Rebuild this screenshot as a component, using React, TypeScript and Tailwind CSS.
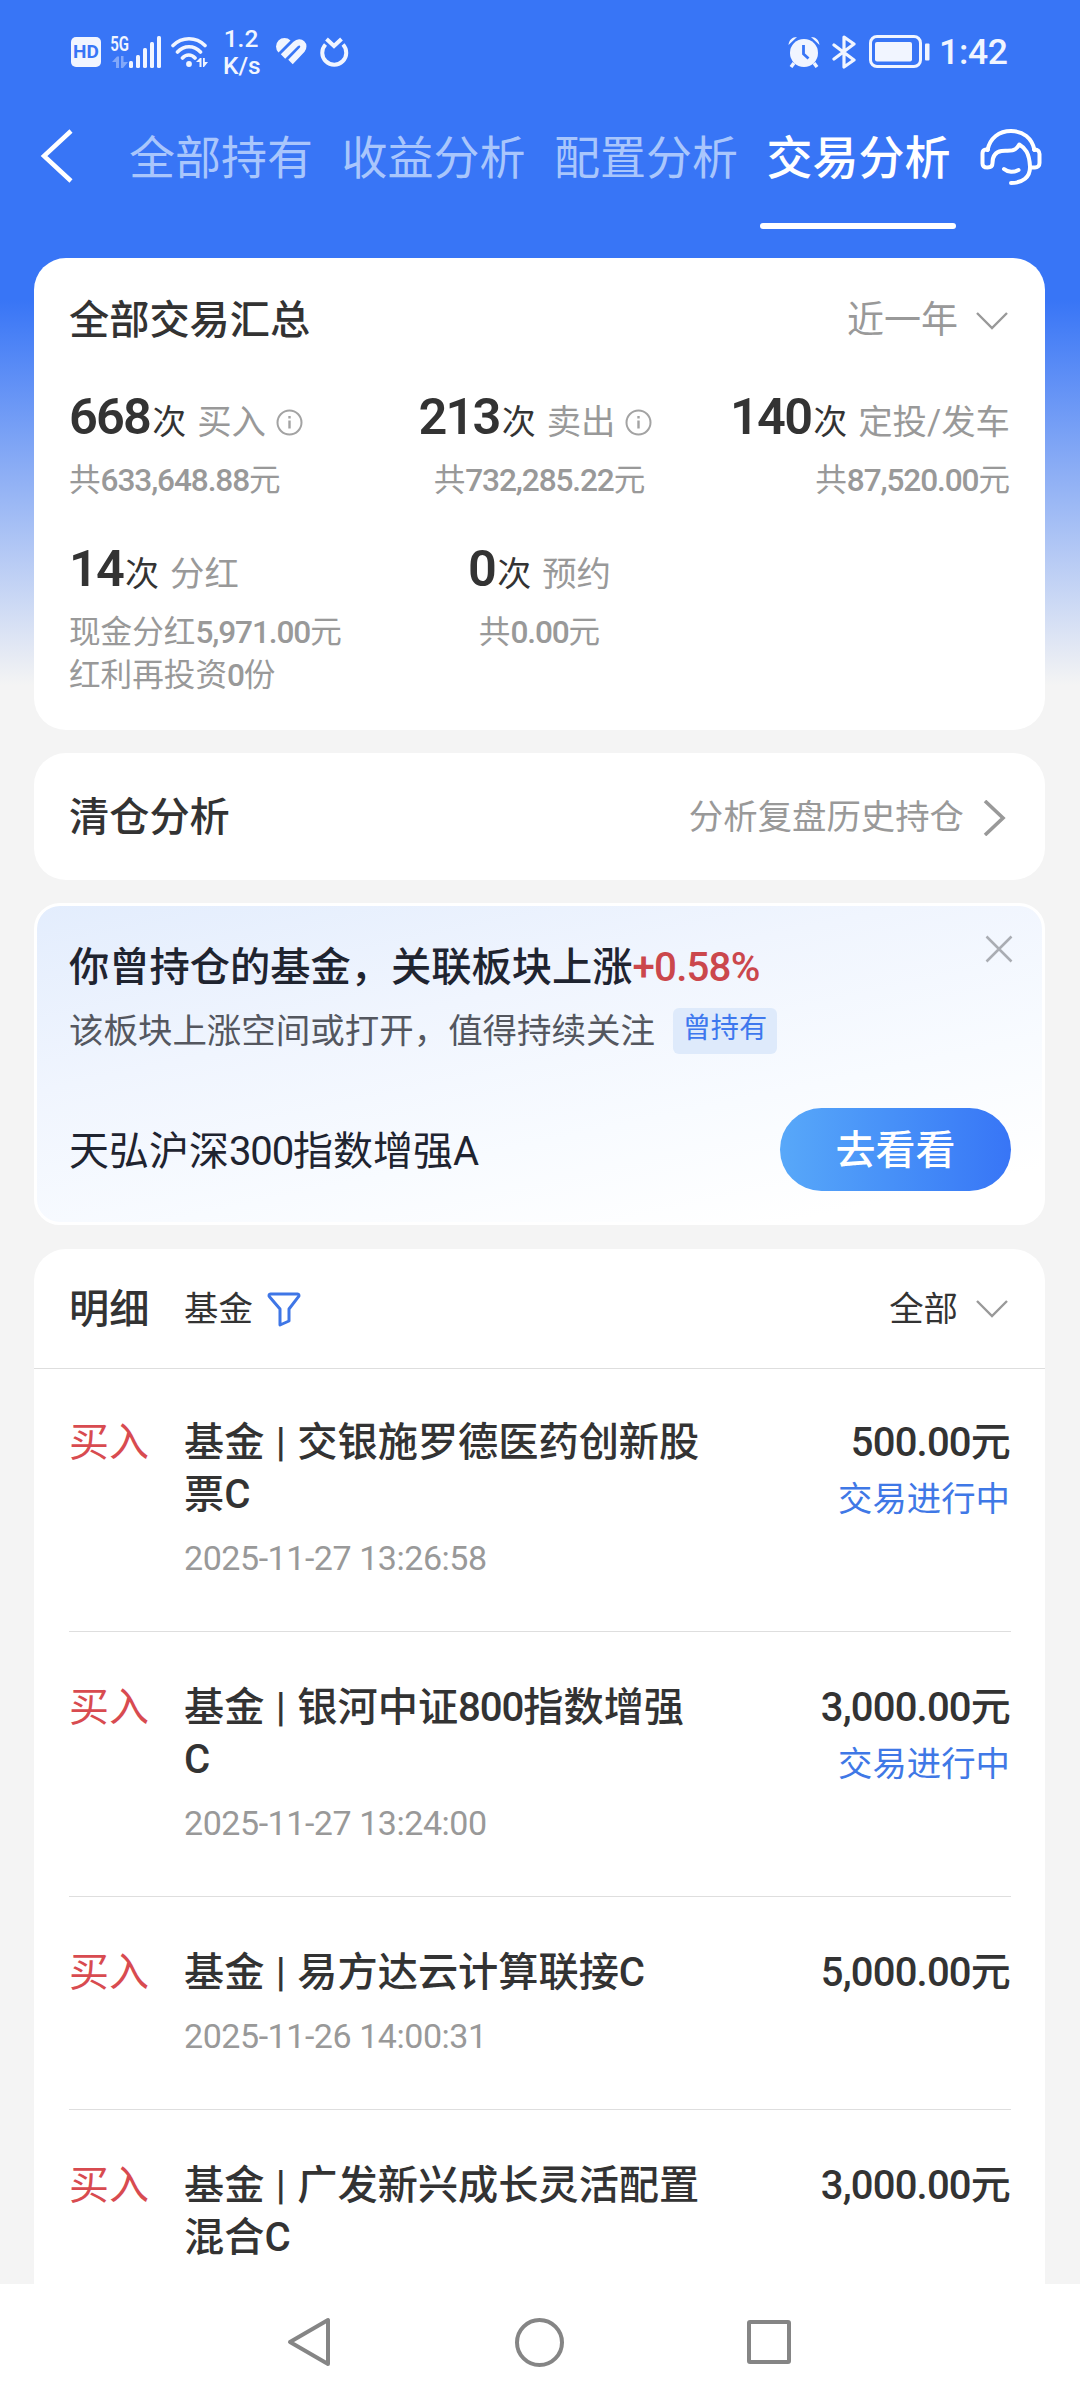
import type { ReactNode } from 'react';

const FONT = "font-[Roboto,'Noto_Sans_CJK_SC',sans-serif]";

type Trade = {
  id: number;
  type: string;
  name: string;
  time?: string;
  amount: string;
  status?: string;
};

const tabs = ['全部持有', '收益分析', '配置分析', '交易分析'];

const trades: Trade[] = [
  { id: 1, type: '买入', name: '基金 | 交银施罗德医药创新股票C', time: '2025-11-27 13:26:58', amount: '500.00', status: '交易进行中' },
  { id: 2, type: '买入', name: '基金 | 银河中证800指数增强C', time: '2025-11-27 13:24:00', amount: '3,000.00', status: '交易进行中' },
  { id: 3, type: '买入', name: '基金 | 易方达云计算联接C', time: '2025-11-26 14:00:31', amount: '5,000.00' },
  { id: 4, type: '买入', name: '基金 | 广发新兴成长灵活配置混合C', amount: '3,000.00' }
];

function StatusBar() {
  return (
    <div className="flex h-[104px] items-center text-[#f1f5ff]">
      <div className="ml-[71px] flex h-[30px] w-[30px] items-center justify-center rounded-[5px] bg-[#f1f5ff] text-[19px] leading-[30px] font-bold text-[#3875f6]">
        HD
      </div>
      <div className="ml-[10px] flex h-[32px] items-end">
        <div className="flex h-[32px] w-[18px] flex-col items-center justify-between">
          <span className="origin-center scale-x-75 text-[20px] leading-[17px] font-semibold">5G</span>
          <svg className="h-[12px] w-[16px]" viewBox="0 0 16 12" fill="currentColor" opacity=".4">
            <path d="M0 6l5-5.500h2V12H4V6zM9 0h2.500v6H16l-5 6H9z" />
          </svg>
        </div>
        <svg className="h-[32px] w-[34px]" viewBox="0 0 34 32" fill="currentColor">
          <rect x="0" y="25" width="4" height="7" rx="1.500" />
          <rect x="7" y="19" width="4" height="13" rx="1.500" />
          <rect x="14" y="12" width="4" height="20" rx="1.500" />
          <rect x="21" y="6" width="4" height="26" rx="1.500" />
          <rect x="28" y="0" width="4" height="32" rx="1.500" />
        </svg>
      </div>
      <svg className="ml-[8px] h-[32px] w-[38px]" viewBox="0 0 38 32" fill="none" stroke="currentColor" strokeWidth="3.600" strokeLinecap="round">
        <path d="M2 9.500c9-9 23-9 32 0M6.500 16c6.500-7 16.500-7 23 0M11.500 22c3.500-4 9-4 12.500 0" />
        <circle cx="18" cy="28" r="2.900" fill="currentColor" stroke="none" />
        <path d="M25 26l4-4h1.500v9h-2v-5zM32 22h1.800v4H37l-4 5h-1z" fill="currentColor" stroke="none" />
      </svg>
      <div className="ml-[14px] w-[36px] text-center text-[24.500px] leading-[27px] font-medium">
        <div>1.2</div>
        <div>K/s</div>
      </div>
      <svg className="ml-[17px] h-[28px] w-[32px]" viewBox="0 0 32 28" fill="none" stroke="currentColor" strokeWidth="6.200">
        <path d="M2.500 14.500A8 8 0 0 1 14.500 2.500z" fill="currentColor" stroke="none" />
        <path d="M7 18.500L19.500 6c5-4.500 10.500 1 6.500 6L14.500 24" />
      </svg>
      <svg className="ml-[12px] h-[30px] w-[29px]" viewBox="0 0 29 30" fill="none" stroke="currentColor" strokeWidth="4">
        <path d="M5.500 7.500a12 12 0 1 0 17.500 0" />
        <path d="M6.500 2l7.500 7L21.500 2" />
      </svg>
      <svg className="ml-auto h-[32px] w-[32px]" viewBox="0 0 32 32" fill="currentColor">
        <circle cx="16" cy="17" r="14" />
        <path d="M.500 9C1 4 4 1 9 1M31.500 9C31 4 28 1 23 1" />
        <path d="M6 27l-3 4M26 27l3 4" stroke="currentColor" strokeWidth="3.500" />
        <path d="M15.500 9v9l5 4.500" stroke="#3875f6" strokeWidth="2.800" fill="none" />
      </svg>
      <svg className="ml-[12px] h-[34px] w-[24px]" viewBox="0 0 24 34" fill="none" stroke="currentColor" strokeWidth="3.200" strokeLinejoin="round" strokeLinecap="round">
        <path d="M2 10l20 15-10 7V2l10 7L2 24" />
      </svg>
      <svg className="ml-[13px] h-[34px] w-[61px]" viewBox="0 0 61 34" fill="none">
        <rect x="1.500" y="1.500" width="50" height="30" rx="6.500" stroke="currentColor" strokeWidth="3" />
        <rect x="6" y="7" width="37" height="19.500" rx="2" fill="currentColor" />
        <rect x="56" y="8.500" width="4.500" height="17" rx="1" fill="currentColor" />
      </svg>
      <span className="mr-[72px] ml-[9px] w-[69px] pt-[2px] text-[35.500px] leading-none font-medium tracking-[-0.300px]">1:42</span>
    </div>
  );
}

function NavTabs() {
  return (
    <div className="flex h-[154px] items-start">
      <svg className="mt-[25px] ml-[40px] h-[54px] w-[33px]" viewBox="0 0 33 54" fill="none" stroke="white" strokeWidth="4.500">
        <path d="M31 2L4 27l27 25" />
      </svg>
      <div className="ml-[56px] flex gap-[28.500px]">
        {tabs.map((tab) => {
          const active = tab === '交易分析';
          return (
            <div
              key={tab}
              className={
                active
                  ? 'relative w-[184px] text-[46px] leading-[109px] font-medium whitespace-nowrap text-white'
                  : 'w-[184px] text-[46px] leading-[109px] whitespace-nowrap text-[#a9c6fc]'
              }
            >
              {tab}
              {active && <div className="absolute top-[119px] -left-[6.500px] h-[6px] w-[196px] rounded-full bg-white" />}
            </div>
          );
        })}
      </div>
      <svg className="mt-[25px] ml-[29px] h-[56px] w-[62px]" viewBox="0 0 62 56" fill="none" stroke="white" strokeWidth="4" strokeLinecap="round" strokeLinejoin="round">
        <path d="M7.500 21C10 9 19 2 31 2s21 7 23.500 19" />
        <path d="M8 20.500H6c-2 0-3.500 1.500-3.500 3.500v10.500c0 3 2 4 5 4s5-1 5-4.500c0-7 3-11 9-12 5-.800 10 1 14-2 2-1.500 3-3 3.800-4.500 6 3.500 10 8.500 10.700 22" />
        <path d="M54 20.500h1c2.500 0 4.500 1.500 4.500 4.500v9c0 3-2 4.500-4.500 4.500h-5" />
        <path d="M24 40c4 3.500 10 3.500 14.500 1M50 38.500c0 9.500-7 15.500-19 15.500" />
      </svg>
    </div>
  );
}

// Latin runs sit tighter than the Chinese glyphs around them
function Mixed({ text }: { text: string }) {
  return (
    <>
      {text.split(/([0-9][0-9.,]*)/).map((part, i) =>
        /^[0-9]/.test(part) ? (
          <span key={i} className="tracking-[-0.028em]">{part}</span>
        ) : (
          part
        )
      )}
    </>
  );
}

function InfoIcon() {
  return (
    <svg className="ml-[10px] h-[27px] w-[27px]" viewBox="0 0 27 27" fill="none" stroke="#a3a3a3" strokeWidth="2">
      <circle cx="13.500" cy="13.500" r="12" />
      <path d="M13.500 11.500v8M13.500 7v2.500" strokeWidth="2.400" />
    </svg>
  );
}

function ChevronDown() {
  return (
    <svg className="ml-[18px] h-[18px] w-[32px]" viewBox="0 0 32 18" fill="none" stroke="#999" strokeWidth="2.400">
      <path d="M1 1l15 15L31 1" />
    </svg>
  );
}

type StatProps = {
  count: string;
  label: string;
  info?: boolean;
  align?: string;
  children: ReactNode;
};

function Stat({ count, label, info, align = 'items-start', children }: StatProps) {
  return (
    <div className={`flex flex-col whitespace-nowrap ${align}`}>
      <div className={info ? 'flex h-[60px] items-baseline pr-[8px]' : 'flex h-[60px] items-baseline'}>
        <span className="text-[50.500px] leading-[60px] font-semibold tracking-[-1.800px] text-[#333]">{count}</span>
        <span className="ml-[2px] text-[34px] text-[#333]">次</span>
        <span className="ml-[11px] text-[34.400px] text-[#999]">{label}</span>
        {info && (
          <span className="translate-y-[2px]">
            <InfoIcon />
          </span>
        )}
      </div>
      <div className="mt-[12px] text-[31.600px] leading-[43px] text-[#999] [&>span]:font-medium [&>span]:tracking-[-0.035em]">{children}</div>
    </div>
  );
}

function SummaryCard() {
  return (
    <section className="h-[472px] rounded-[32px] bg-white px-[35px]">
      <div className="flex h-[126px] items-center">
        <h2 className="text-[40.200px] font-medium text-[#333]">全部交易汇总</h2>
        <div className="mr-[2px] ml-auto flex items-center text-[37px] text-[#999]">
          近一年
          <ChevronDown />
        </div>
      </div>
      <div className="mt-[3px] grid h-[152px] grid-cols-3">
        <Stat count="668" label="买入" info><Mixed text="共633,648.88元" /></Stat>
        <Stat count="213" label="卖出" info align="items-center"><Mixed text="共732,285.22元" /></Stat>
        <Stat count="140" label="定投/发车" align="items-end"><Mixed text="共87,520.00元" /></Stat>
      </div>
      <div className="grid grid-cols-3">
        <Stat count="14" label="分红">
          <Mixed text="现金分红5,971.00元" />
          <br />
          <Mixed text="红利再投资0份" />
        </Stat>
        <Stat count="0" label="预约" align="items-center"><Mixed text="共0.00元" /></Stat>
      </div>
    </section>
  );
}

function ClearanceCard() {
  return (
    <section className="mt-[23px] flex h-[127px] items-center rounded-[32px] bg-white px-[35px] pt-[2px]">
      <h2 className="pt-[1px] text-[40.200px] font-medium text-[#333]">清仓分析</h2>
      <span className="ml-auto text-[34.400px] text-[#999]">分析复盘历史持仓</span>
      <svg className="mr-[4px] ml-[18px] h-[36px] w-[24px]" viewBox="0 0 24 36" fill="none" stroke="#999" strokeWidth="3.600">
        <path d="M3 1l18 17L3 35" />
      </svg>
    </section>
  );
}

function PromoCard() {
  return (
    <section className="relative mt-[23px] h-[322px] rounded-[26px] border-[3px] border-white bg-[linear-gradient(168deg,#e3edfd_0%,#f0f5fe_35%,#f8fbff_65%,#ffffff_90%)] pr-[31px] pl-[32px] whitespace-nowrap">
      <svg className="absolute top-[29px] right-[29px] h-[28px] w-[28px]" viewBox="0 0 28 28" stroke="#aaadb3" strokeWidth="2.500">
        <path d="M1.500 1.500l25 25M26.500 1.500l-25 25" />
      </svg>
      <h2 className="pt-[34px] text-[40.250px] leading-[56px] font-medium text-[#1f2430]">
        你曾持仓的基金，关联板块上涨<span className="tracking-[-0.020em] text-[#cb474c]">+0.58%</span>
      </h2>
      <div className="mt-[11px] flex h-[48px] items-center">
        <span className="pt-[1px] text-[34.480px] text-[#54575f]">该板块上涨空间或打开，值得持续关注</span>
        <span className="ml-[18px] flex h-[46px] w-[104px] items-center justify-center rounded-[6px] bg-[#deeafb] pb-[3px] text-[28.200px] text-[#3e78ee]">曾持有</span>
      </div>
      <div className="mt-[53px] flex h-[83px] items-center justify-between">
        <span className="pt-[4px] text-[40px] text-[#1f2430]"><Mixed text="天弘沪深300指数增强A" /></span>
        <button className="h-[83px] w-[231px] rounded-full bg-linear-to-r from-[#58a8f9] to-[#3875f6] pt-[2px] text-[40px] font-medium text-white">去看看</button>
      </div>
    </section>
  );
}

function TradeRow({ trade }: { trade: Trade }) {
  return (
    <div className="mr-[34px] ml-[35px] flex border-b border-[#dedede] pt-[50px] pb-[47px] first:pt-[48px] last:border-0">
      <span className="w-[115px] text-[40px] leading-[52px] text-[#d84b50]">{trade.type}</span>
      <div className="w-[518px]">
        <div className="text-[40.200px] leading-[52px] font-medium break-all text-[#333] [word-spacing:1.500px]"><Mixed text={trade.name} /></div>
        <div className="mt-[13px] mb-[1px] h-[49px] text-[34px] leading-[49px] tracking-[-0.450px] text-[#999]">{trade.time}</div>
      </div>
      <div className="mr-[1px] ml-auto text-right whitespace-nowrap">
        <div className="text-[40px] leading-[52px] font-medium tracking-[-0.020em] text-[#333]">{trade.amount}元</div>
        {trade.status && <div className="mt-[5px] text-[34.400px] leading-[50px] text-[#3f78e6]">{trade.status}</div>}
      </div>
    </div>
  );
}

function TradeList() {
  return (
    <section className="mt-[24px] rounded-t-[32px] bg-white">
      <div className="flex h-[120px] items-center border-b border-[#dedede] px-[35px] pt-[2px] text-[34.400px] text-[#333]">
        <h2 className="w-[115px] pt-[1px] text-[40.200px] font-medium">明细</h2>
        基金
        <svg className="ml-[14px] h-[35px] w-[34px]" viewBox="0 0 34 35" fill="none" stroke="#3f76e6" strokeWidth="3" strokeLinejoin="round">
          <path d="M3.500 2h27c1.500 0 2 1.500 1 2.700L22 17v12l-9 4V17L2.500 4.700C1.500 3.500 2 2 3.500 2z" />
        </svg>
        <div className="mr-[2px] ml-auto flex items-center">
          全部
          <ChevronDown />
        </div>
      </div>
      <div>
        {trades.map((trade) => (
          <TradeRow key={trade.id} trade={trade} />
        ))}
      </div>
    </section>
  );
}

function SystemNav() {
  return (
    <nav className="flex h-[116px] items-center bg-white">
      <svg className="ml-[286px] h-[50px] w-[46px]" viewBox="0 0 46 50" fill="none" stroke="#858585" strokeWidth="4" strokeLinejoin="round">
        <path d="M42 3v44L4 25z" />
      </svg>
      <div className="ml-[183px] h-[49px] w-[49px] rounded-full border-4 border-[#858585]" />
      <div className="ml-[183px] h-[44px] w-[44px] rounded-[3px] border-4 border-[#858585]" />
    </nav>
  );
}

export default function App() {
  return (
    <div className={`flex h-[2400px] w-[1080px] flex-col overflow-hidden bg-[#f4f4f4] ${FONT}`}>
      <div className="h-[2284px] overflow-hidden bg-[linear-gradient(180deg,#3875f6_300px,#f4f4f4_685px)]">
        <StatusBar />
        <NavTabs />
        <main className="mr-[35px] ml-[34px]">
          <SummaryCard />
          <ClearanceCard />
          <PromoCard />
          <TradeList />
        </main>
      </div>
      <SystemNav />
    </div>
  );
}
